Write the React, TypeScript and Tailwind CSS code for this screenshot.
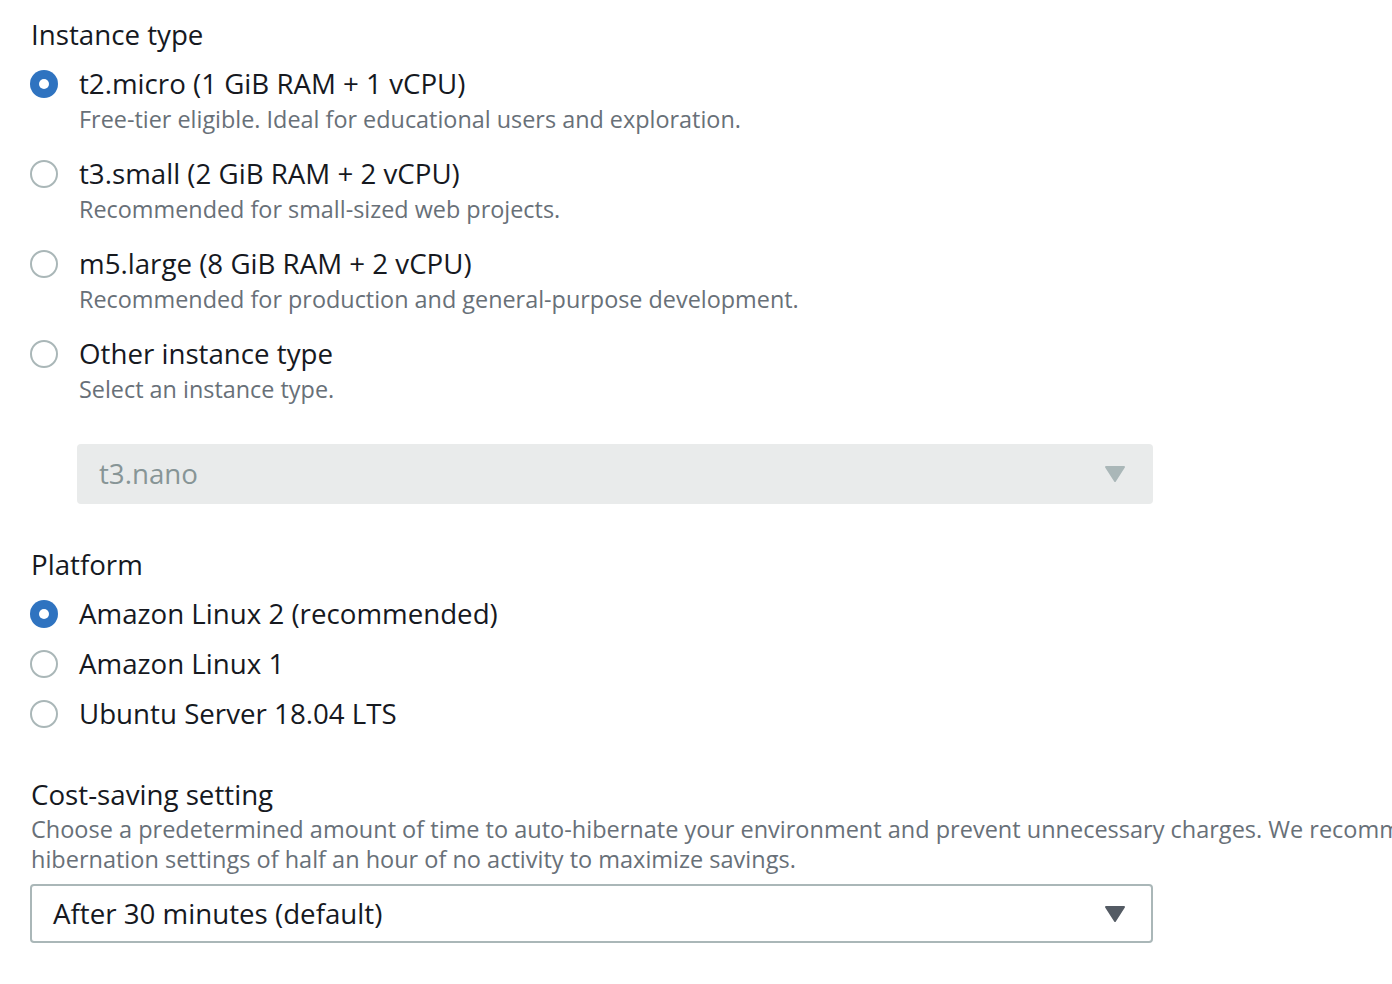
import React from "react";

const font = { fontFamily: '"Open Sans", "Noto Sans", sans-serif' };

function Radio({ checked }: { checked?: boolean }) {
  return checked ? (
    <span className="flex h-[28px] w-[28px] shrink-0 items-center justify-center rounded-full bg-[#2f73c0]">
      <span className="h-[10px] w-[10px] rounded-full bg-white" />
    </span>
  ) : (
    <span className="h-[28px] w-[28px] shrink-0 rounded-full border-2 border-[#aab7b8] bg-white" />
  );
}

function Option({ label, desc, checked }: { label: string; desc?: string; checked?: boolean }) {
  return (
    <div className="flex items-start gap-[21px]">
      <div className="flex h-[40px] items-center pt-[2px]">
        <Radio checked={checked} />
      </div>
      <div className="flex flex-col">
        <div className="h-[40px] text-[27.7px] leading-[40px] text-[#16191f]">{label}</div>
        {desc && <div className="h-[32px] text-[23.4px] leading-[32px] text-[#687078]">{desc}</div>}
      </div>
    </div>
  );
}

function Caret({ color }: { color: string }) {
  return (
    <svg width="22" height="18" viewBox="0 0 22 18">
      <path d="M2 2 L20 2 L11 16 Z" fill={color} stroke={color} strokeWidth="2" strokeLinejoin="round" />
    </svg>
  );
}

export default function App() {
  return (
    <div className="h-[984px] w-[1392px] overflow-hidden bg-white" style={font}>
      <div className="flex flex-col pl-[30px] pt-[14px]">
        <div className="h-[40px] pl-[1px] text-[27.7px] leading-[40px] text-[#16191f]">Instance type</div>
        <div className="mt-[9px] flex flex-col gap-[18px]">
          <Option checked label="t2.micro (1 GiB RAM + 1 vCPU)" desc="Free-tier eligible. Ideal for educational users and exploration." />
          <Option label="t3.small (2 GiB RAM + 2 vCPU)" desc="Recommended for small-sized web projects." />
          <Option label="m5.large (8 GiB RAM + 2 vCPU)" desc="Recommended for production and general-purpose development." />
          <Option label="Other instance type" desc="Select an instance type." />
        </div>
        <div className="ml-[47px] mt-[39px] flex h-[60px] w-[1076px] items-center justify-between rounded-[4px] bg-[#e9ebeb] pl-[22px] pr-[27px]">
          <span className="text-[27.7px] text-[#879596]">t3.nano</span>
          <Caret color="#aab7b8" />
        </div>

        <div className="mt-[40px] h-[40px] pl-[1px] text-[27.7px] leading-[40px] text-[#16191f]">Platform</div>
        <div className="mt-[9px] flex flex-col gap-[10px]">
          <Option checked label="Amazon Linux 2 (recommended)" />
          <Option label="Amazon Linux 1" />
          <Option label="Ubuntu Server 18.04 LTS" />
        </div>

        <div className="mt-[41px] h-[40px] pl-[1px] text-[27.7px] leading-[40px] text-[#16191f]">Cost-saving setting</div>
        <div className="whitespace-nowrap pl-[1px] text-[23.5px] leading-[30px] text-[#687078]">
          Choose a predetermined amount of time to auto-hibernate your environment and prevent unnecessary charges. We recommend
          <br />
          hibernation settings of half an hour of no activity to maximize savings.
        </div>
        <div className="mt-[10px] flex h-[59px] w-[1123px] items-center justify-between rounded-[4px] border-2 border-[#aab7b8] bg-white pl-[21px] pr-[25px]">
          <span className="text-[27.7px] text-[#16191f]">After 30 minutes (default)</span>
          <Caret color="#545b64" />
        </div>
      </div>
    </div>
  );
}
